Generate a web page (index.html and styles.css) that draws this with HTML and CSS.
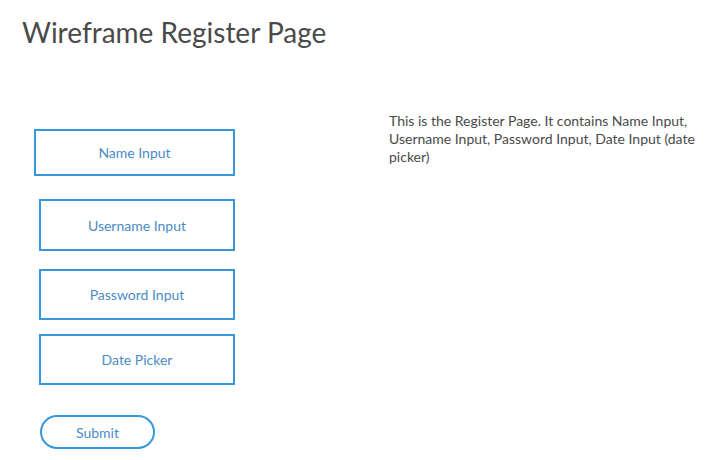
FILE: index.html
```html
<!DOCTYPE html>
<html>
<head>
<meta charset="utf-8">
<link rel="stylesheet" href="styles.css">
</head>
<body>
<h1 class="title">Wireframe Register Page</h1>
<div class="main">
  <div class="form">
    <div class="field field-name">Name Input</div>
    <div class="field field-user">Username Input</div>
    <div class="field field-pass">Password Input</div>
    <div class="field field-date">Date Picker</div>
    <div class="submit">Submit</div>
  </div>
  <p class="desc">This is the Register Page. It contains Name Input, Username Input, Password Input, Date Input (date picker)</p>
</div>
</body>
</html>
```
FILE: styles.css
```css
html, body {
  margin: 0;
  padding: 0;
  background: #ffffff;
  font-family: Lato, "Open Sans", sans-serif;
}
.title {
  margin: 15px 0 0 22px;
  font-size: 28px;
  font-weight: 400;
  line-height: normal;
  color: #4a4a4a;
}
.main {
  display: flex;
  margin-top: 61px;
}
.form {
  width: 389px;
  flex: none;
  display: flex;
  flex-direction: column;
  align-items: flex-start;
  padding-top: 19px;
}
.field {
  box-sizing: border-box;
  border: 2px solid #3498db;
  display: flex;
  align-items: center;
  justify-content: center;
  font-size: 14px;
  color: #4a8cc4;
  width: 196px;
  margin-left: 39px;
}
.field-name {
  width: 201px;
  margin-left: 34px;
  height: 47px;
}
.field-user {
  margin-top: 23px;
  height: 52px;
}
.field-pass {
  margin-top: 18px;
  height: 51px;
}
.field-date {
  margin-top: 14px;
  height: 51px;
}
.submit {
  box-sizing: border-box;
  margin: 30px 0 0 40px;
  width: 115px;
  height: 34px;
  border: 2px solid #3498db;
  border-radius: 17px;
  display: flex;
  align-items: center;
  justify-content: center;
  font-size: 14px;
  color: #4a8cc4;
}
.desc {
  margin: 0;
  padding-top: 2px;
  width: 320px;
  font-size: 14px;
  line-height: 18px;
  color: #4a4a4a;
}
```
